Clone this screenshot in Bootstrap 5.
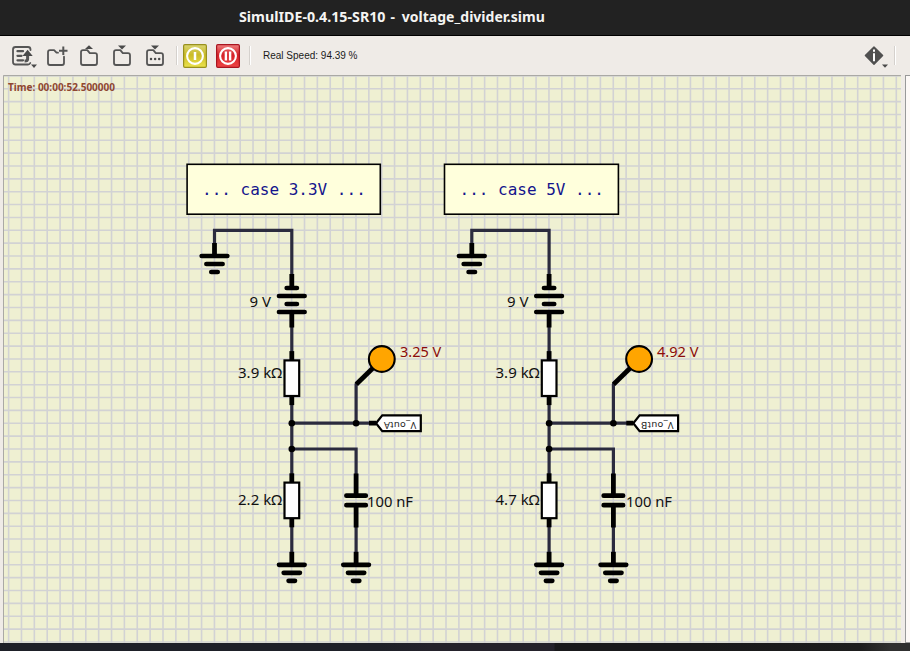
<!DOCTYPE html>
<html lang="en">
<head>
<meta charset="utf-8">
<meta name="viewport" content="width=device-width, initial-scale=1">
<title>SimulIDE-0.4.15-SR10 - voltage_divider.simu</title>
<link href="https://cdn.jsdelivr.net/npm/bootstrap@5.3.0/dist/css/bootstrap.min.css" rel="stylesheet">
<style>
body{background:#efebe7;font-family:"Noto Sans","Open Sans",sans-serif;color:#1a1a1a}
.titlebar{height:36px;background:#222;border-bottom:1px solid #000;color:#f4f4f2;padding-left:239px}
.titlebar svg,.tools svg,.stage svg{display:block;flex:none}
.tools{height:39px;background:#efebe7;padding-left:9px}
.tool{background:none;border:0;padding:0;line-height:0}
.sep{width:2px;height:19px;background:#d5d1cd;border-right:1px solid #fff;flex:none}
.sep-power{margin:0 5px 0 2px}
.sep-speed{margin-left:9px}
.sep-end{margin:0 14px 0 2px}
.power{width:24px;height:24px}
.pause{margin-left:9px}
.speed{font:10px "Liberation Sans",Arial,sans-serif;margin-left:12px;width:110px}
.stage{height:568px;padding-left:3px}
.side{width:5px;height:568px;border:1px solid #999;border-right:0;background:#fdf9f7;margin-left:4px}
.dock{height:8px;background:linear-gradient(90deg,#1e2028 0 380px,#24222b 430px 554px,#19191b 555px 700px,#1d1d1d 860px,#303030 890px)}
.wire{fill:none;stroke:#2b2b3e;stroke-width:3.2;stroke-linejoin:miter;stroke-linecap:round}
.pin{fill:none;stroke:#000;stroke-width:4.8}
.plate{fill:none;stroke:#000;stroke-width:4.7;stroke-linecap:round}
.body{fill:#fff;stroke:#000;stroke-width:2.2}
.val{font-size:14.2px;fill:#111}
.volt{font-size:14.2px;fill:#8b0a0a}
.note{font:16px "DejaVu Sans Mono",monospace;fill:#14148c}
.ico{fill:none;stroke:#555;stroke-width:1.8;stroke-linecap:round;stroke-linejoin:round}
.solid{fill:#4a4a4a;stroke:none}
</style>
<script src="https://cdn.jsdelivr.net/npm/bootstrap@5.3.0/dist/js/bootstrap.bundle.min.js"></script>
</head>
<body class="overflow-hidden">
<div class="d-flex flex-column vh-100">
<header class="titlebar">
  <svg width="310" height="35" viewBox="239 0 310 35" font-size="14" font-weight="700" fill="#f4f4f2"><text x="239" y="22" textLength="146.500" lengthAdjust="spacingAndGlyphs">SimulIDE-0.4.15-SR10</text><text x="390.500" y="22">-</text><text x="401.800" y="22" textLength="143" lengthAdjust="spacingAndGlyphs">voltage_divider.simu</text></svg>
</header>
<nav class="tools d-flex align-items-center" aria-label="Tools">
  <button class="tool" aria-label="Recent circuits"><svg width="33" height="28" viewBox="9 41.500 33 28">
    <path class="ico" d="M30.500 49.500V49a2.500 2.500 0 0 0-2.500-2.500H15.500A2.500 2.500 0 0 0 13 49v12.500a2.500 2.500 0 0 0 2.500 2.500H28a2.500 2.500 0 0 0 2.300-1.500"/>
    <path class="ico" d="M17.500 50.700h5.500M17.500 55.300h4M17.500 59.800h5.500" style="stroke-width:2.300"/>
    <path class="ico" style="stroke-width:3;stroke-linecap:butt" d="M27.600 53v5.500q0 2-3 2"/><path class="solid" d="M27.600 49.300l5.100 6.200h-10.200zM31 64h6l-3 3.400z"/></svg></button>
  <button class="tool" aria-label="New"><svg width="33" height="28" viewBox="42 41.500 33 28">
    <path class="ico" d="M58 52.200h-1.500l-2.400-2.500H50a2 2 0 0 0-2 2v10.800a2 2 0 0 0 2 2h12a2 2 0 0 0 2-2v-6.300"/><path class="ico" style="stroke-width:2;stroke-linecap:butt" d="M63.300 46v8.500M59 50.200h8.500"/></svg></button>
  <button class="tool" aria-label="Open"><svg width="33" height="28" viewBox="75 41.500 33 28">
    <path class="ico" d="M83 49.700h4.300l2.500 3H95a2 2 0 0 1 2 2v7.800a2 2 0 0 1-2 2H83a2 2 0 0 1-2-2V51.700a2 2 0 0 1 2-2z"/><path class="solid" d="M89 44.700l4 3.900h-8z"/></svg></button>
  <button class="tool" aria-label="Save"><svg width="33" height="28" viewBox="108 41.500 33 28">
    <path class="ico" d="M116 49.700h4.300l2.500 3h5.200a2 2 0 0 1 2 2v7.800a2 2 0 0 1-2 2h-12a2 2 0 0 1-2-2V51.700a2 2 0 0 1 2-2z"/><path class="solid" d="M122 48.900l4-3.900h-8z"/></svg></button>
  <button class="tool" aria-label="Save as"><svg width="33" height="28" viewBox="141 41.500 33 28">
    <path class="ico" d="M149 49.700h4.300l2.500 3h5.200a2 2 0 0 1 2 2v7.800a2 2 0 0 1-2 2h-12a2 2 0 0 1-2-2V51.700a2 2 0 0 1 2-2z"/><path class="solid" d="M155 48.900l4-3.900h-8z"/><g class="solid"><circle cx="151" cy="58.500" r="1.250"/><circle cx="155.100" cy="58.500" r="1.250"/><circle cx="159.200" cy="58.500" r="1.250"/></g></svg></button>
  <span class="sep sep-power"></span>
  <button class="tool power" aria-label="Power"><svg width="24" height="24" viewBox="0 0 24 24">
    <defs><linearGradient id="gy" x2="0" y2="1"><stop stop-color="#dad573"/><stop offset=".45" stop-color="#cabb27"/><stop offset="1" stop-color="#ece34c"/></linearGradient><linearGradient id="gr" x2="0" y2="1"><stop stop-color="#f08080"/><stop offset=".45" stop-color="#d52229"/><stop offset="1" stop-color="#ee4545"/></linearGradient></defs>
    <rect x=".6" y=".6" width="22.800" height="22.800" rx="1.300" fill="url(#gy)" stroke="#98901e" stroke-width="1.200"/><circle cx="12" cy="12" r="7.900" fill="none" stroke="#fff" stroke-width="2.100"/><path d="M12 8v8" stroke="#fff" stroke-width="2.500"/></svg></button>
  <button class="tool power pause" aria-label="Pause"><svg width="24" height="24" viewBox="0 0 24 24"><rect x=".6" y=".6" width="22.800" height="22.800" rx="1.300" fill="url(#gr)" stroke="#a91520" stroke-width="1.200"/><circle cx="12" cy="12" r="7.900" fill="none" stroke="#fff" stroke-width="2.100"/><path d="M9.900 7.500v9M14.100 7.500v9" stroke="#fff" stroke-width="2.400"/></svg></button>
  <span class="sep sep-speed"></span>
  <span class="speed text-nowrap">Real Speed: 94.39 %</span>
  <button class="tool ms-auto" aria-label="Info"><svg width="30" height="28" viewBox="862 41.500 30 28">
    <path d="M874 46.400l8.600 8.700-8.600 8.700-8.600-8.700z" fill="#505050" stroke="#505050" stroke-width="1.400" stroke-linejoin="round"/><path d="M874 49v2.200M874 52.800v8" stroke="#fff" stroke-width="2"/><path class="solid" d="M882 64h6l-3 3.300z"/></svg></button>
  <span class="sep sep-end"></span>
</nav>
<main class="stage d-flex">
<svg width="898" height="568" viewBox="3 75 898 568">
  <defs>
    <g id="gnd"><path class="pin" d="M0-13V0"/><path class="plate" d="M-12.800 0H12.800M-8.100 8H8.100M-3.200 16H3.200"/></g>
    <g id="res"><path class="pin" d="M0-27V27"/><rect class="body" x="-7.300" y="-17.700" width="14.700" height="35.600"/></g>
    <g id="divider">
      <path class="wire" d="M214.500 243V230.300H291.800V275M291.800 326V352M291.800 404V474M291.800 526V552M291.800 423.200H370M356.100 423V384M291.800 449H356.100V475M356.100 526V552"/>
      <use href="#gnd" x="214.500" y="256"/><use href="#gnd" x="291.800" y="564.800"/><use href="#gnd" x="356.100" y="564.800"/>
      <path class="pin" d="M291.800 274V288M291.800 312V327.500M356.100 473.500V495M356.100 506V527.500M369 423.200H376"/>
      <path class="plate" d="M286.700 288H296.900M279 296H304.600M286.700 304H296.900M279 312H304.600M346.400 495.700H365.800M346.400 505.200H365.800"/>
      <use href="#res" x="291.800" y="378.100"/><use href="#res" x="291.800" y="500.300"/>
      <circle cx="291.800" cy="423.200" r="3.300"/><circle cx="291.800" cy="449" r="3.300"/><circle cx="356.100" cy="423.200" r="3.300"/>
      <path class="pin" d="M356.300 384.300L374 367"/><circle cx="381.800" cy="359" r="12.900" fill="#ffa500" stroke="#000" stroke-width="2.100"/>
      <path class="body" d="M376 423.200L382.300 415.400H420.800V431.200H382.300Z"/>
    </g>
  </defs>
  <rect x="3" y="75" width="898" height="568" fill="#eff0d2"/>
  <g fill="none" stroke="#d2d2d4" stroke-dasharray="1.600 11.265">
    <path d="M7.810 359H901" stroke-width="568"/>
    <path d="M452 75.120V643" stroke-width="898"/>
  </g>
  <path d="M3.500 643V75.500H901" fill="none" stroke="#aaa9a5"/>
  <text x="8" y="91" font-size="10.300" font-weight="700" fill="#8f4630" textLength="107" lengthAdjust="spacingAndGlyphs">Time: 00:00:52.500000</text>
  <g fill="#ffffdc" stroke="#000" stroke-width="1.600"><rect x="187.100" y="164.300" width="193.200" height="49.900"/><rect x="444.500" y="164.300" width="173.900" height="49.900"/></g>
  <text class="note" x="202" y="195.300">... case 3.3V ...</text>
  <text class="note" x="459.500" y="195.300">... case 5V ...</text>
  <use href="#divider"/><use href="#divider" x="257.300"/>
  <g class="val">
    <text x="249.500" y="307" textLength="21.500" lengthAdjust="spacingAndGlyphs">9 V</text><text x="238" y="378.200" textLength="44" lengthAdjust="spacingAndGlyphs">3.9 kΩ</text><text x="238" y="505" textLength="44" lengthAdjust="spacingAndGlyphs">2.2 kΩ</text><text x="367" y="507" textLength="46" lengthAdjust="spacingAndGlyphs">100 nF</text>
    <text x="507" y="307" textLength="21.500" lengthAdjust="spacingAndGlyphs">9 V</text><text x="495.500" y="378.200" textLength="44" lengthAdjust="spacingAndGlyphs">3.9 kΩ</text><text x="495.500" y="505" textLength="44" lengthAdjust="spacingAndGlyphs">4.7 kΩ</text><text x="626" y="507" textLength="46" lengthAdjust="spacingAndGlyphs">100 nF</text>
  </g>
  <g class="volt"><text x="400" y="357" textLength="41.300" lengthAdjust="spacingAndGlyphs">3.25 V</text><text x="657" y="357" textLength="41.500" lengthAdjust="spacingAndGlyphs">4.92 V</text></g>
  <g font-size="9.500" fill="#222"><text transform="translate(416.300 421.600) rotate(180)" textLength="32.500">V_outA</text><text transform="translate(673.600 421.600) rotate(180)" textLength="32.500">V_outB</text></g>
  <g fill="#aaa"><circle cx="1.500" cy="337" r=".5"/></g>
</svg>
<aside class="side"></aside>
</main>
<footer class="dock"></footer>
</div>
</body>
</html>
